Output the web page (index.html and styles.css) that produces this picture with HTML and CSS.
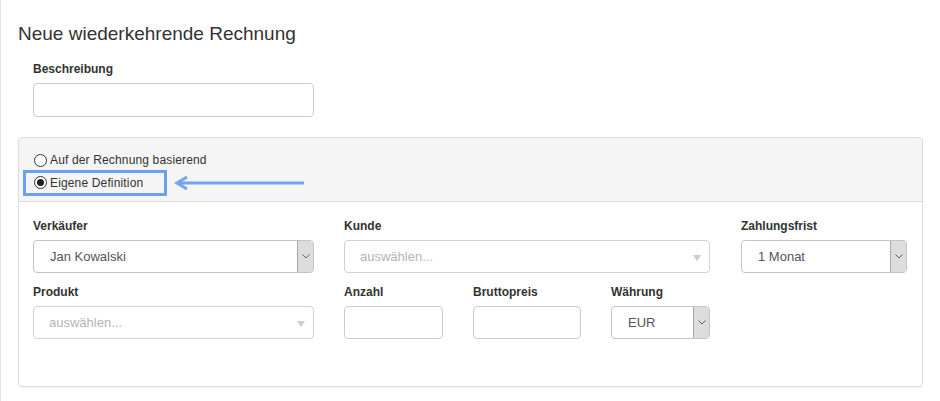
FILE: index.html
```html
<!DOCTYPE html>
<html lang="de">
  <head>
    <meta charset="utf-8" />
    <meta name="viewport" content="width=device-width, initial-scale=1" />
    <title>Neue wiederkehrende Rechnung</title>
    <link rel="stylesheet" href="styles.css">
  </head>
  <body>
    <div class="page">
      <h1 class="page-title">Neue wiederkehrende Rechnung</h1>

      <div class="field field-desc">
        <label class="field-label" for="desc">Beschreibung</label>
        <input id="desc" class="text-input text-input-tall" type="text" />
      </div>

      <div class="panel">
        <!-- Invoice source switch -->
        <div class="panel-heading">
          <label class="radio-row">
            <span class="radio"></span>Auf der Rechnung basierend
          </label>
          <label class="radio-row radio-row-marked">
            <span class="radio radio-checked"></span>Eigene Definition
            <svg class="pointer-arrow" width="132" height="16" viewBox="0 0 132 16">
              <path d="M3 8 H130" />
              <path d="M13 2 L3 8 L13 14" />
            </svg>
          </label>
        </div>

        <div class="panel-body form-grid">
          <div class="field col-seller">
            <label class="field-label">Verkäufer</label>
            <div class="select">
              <span class="select-value">Jan Kowalski</span>
              <span class="select-caret">
                <svg width="8" height="5" viewBox="0 0 8 5"><path d="M0.5 0.5 L4 4 L7.5 0.5" /></svg>
              </span>
            </div>
          </div>

          <div class="field col-customer">
            <label class="field-label">Kunde</label>
            <div class="chooser">
              <span class="chooser-text">auswählen...</span>
              <span class="chooser-tri"></span>
            </div>
          </div>

          <div class="field col-term">
            <label class="field-label">Zahlungsfrist</label>
            <div class="select">
              <span class="select-value">1 Monat</span>
              <span class="select-caret">
                <svg width="8" height="5" viewBox="0 0 8 5"><path d="M0.5 0.5 L4 4 L7.5 0.5" /></svg>
              </span>
            </div>
          </div>

          <div class="field col-product">
            <label class="field-label">Produkt</label>
            <div class="chooser">
              <span class="chooser-text">auswählen...</span>
              <span class="chooser-tri"></span>
            </div>
          </div>

          <div class="field">
            <label class="field-label">Anzahl</label>
            <input class="text-input" type="text" />
          </div>

          <div class="field">
            <label class="field-label">Bruttopreis</label>
            <input class="text-input" type="text" />
          </div>

          <div class="field">
            <label class="field-label">Währung</label>
            <div class="select">
              <span class="select-value">EUR</span>
              <span class="select-caret">
                <svg width="8" height="5" viewBox="0 0 8 5"><path d="M0.5 0.5 L4 4 L7.5 0.5" /></svg>
              </span>
            </div>
          </div>
        </div>
      </div>
    </div>
  </body>
</html>
```

FILE: styles.css
```css
html {
  background-color: #ffffff;
}

body {
  margin: 0;
  min-height: 100vh;
  box-sizing: border-box;
  border-left: 1px solid #dfe6ed;
  font-family: "Liberation Sans", Arial, sans-serif;
  font-size: 12px;
  color: #333333;
}

.page {
  padding: 23px 17px 0 17px;
}

.page-title {
  margin: 0;
  font-size: 19px;
  line-height: 21px;
  font-weight: normal;
  color: #333333;
}

/* Form fields */
.field-label {
  display: block;
  margin-bottom: 6px;
  font-size: 12px;
  line-height: 15px;
  font-weight: bold;
  color: #333333;
}

.field-desc {
  width: 281px;
  margin-top: 18px;
  padding-left: 15px;
}

.text-input {
  display: block;
  box-sizing: border-box;
  width: 100%;
  height: 33px;
  margin: 0;
  padding: 0 12px;
  border: 1px solid #cccccc;
  border-radius: 4px;
  background: #ffffff;
  font-family: inherit;
  font-size: 13px;
  outline: none;
}

.text-input-tall {
  height: 34px;
}

.select {
  display: flex;
  box-sizing: border-box;
  height: 33px;
  border: 1px solid #c4c4c4;
  border-radius: 4px;
  overflow: hidden;
  background: #ffffff;
}

.select-value {
  flex: 1;
  padding-left: 16px;
  font-size: 13px;
  line-height: 31px;
  color: #555555;
}

.select-caret {
  display: flex;
  align-items: center;
  justify-content: center;
  width: 15px;
  border-left: 1px solid #a9a9a9;
  background: #dddddd;
}

.select-caret path {
  fill: none;
  stroke: #606060;
  stroke-width: 1;
}

.chooser {
  display: flex;
  align-items: center;
  box-sizing: border-box;
  height: 33px;
  padding: 0 8px 0 15px;
  border: 1px solid #d2d2d2;
  border-radius: 4px;
  background: #ffffff;
}

.chooser-text {
  flex: 1;
  font-size: 13px;
  color: #b4b4b4;
}

.chooser-tri {
  width: 0;
  height: 0;
  margin-top: 3px;
  border-left: 4px solid transparent;
  border-right: 4px solid transparent;
  border-top: 6px solid #cccccc;
}

/* Panel */
.panel {
  margin-top: 20px;
  border: 1px solid #dddddd;
  border-radius: 4px;
  box-shadow: 0 1px 1px rgba(0, 0, 0, 0.05);
  background: #ffffff;
}

.panel-heading {
  display: flex;
  flex-direction: column;
  align-items: flex-start;
  padding: 13px 4px 5px;
  background: #f5f5f5;
  border-bottom: 1px solid #dddddd;
  border-radius: 4px 4px 0 0;
}

.radio-row {
  display: flex;
  align-items: center;
  padding-left: 11px;
  line-height: 19px;
  font-size: 12px;
  letter-spacing: 0.15px;
  color: #333333;
}

.radio-row-marked {
  position: relative;
  line-height: 20px;
  padding: 0 21px 0 8px;
  border: 3px solid #6c9ff0;
}

.radio {
  position: relative;
  box-sizing: border-box;
  width: 13px;
  height: 13px;
  margin: -1px 3px 0 0;
  border: 1px solid #333333;
  border-radius: 50%;
  background: #ffffff;
}

.radio-checked::after {
  content: "";
  position: absolute;
  top: 2px;
  left: 2px;
  width: 7px;
  height: 7px;
  border-radius: 50%;
  background: #222222;
}

.pointer-arrow {
  position: absolute;
  left: calc(100% + 10px);
  top: 2px;
}

.pointer-arrow path {
  fill: none;
  stroke: #73a4f3;
  stroke-width: 3;
}

.panel-body {
  padding: 17px 15px 47px 14px;
}

.form-grid {
  display: grid;
  grid-template-columns: 281px 99px 108px 99px 1fr;
  column-gap: 30px;
  row-gap: 12px;
}

.col-seller {
  grid-column: 1;
}

.col-customer {
  grid-column: 2 / span 3;
}

.col-term {
  grid-column: 5;
  margin-left: 1px;
}

.col-product {
  grid-column: 1;
}
```
